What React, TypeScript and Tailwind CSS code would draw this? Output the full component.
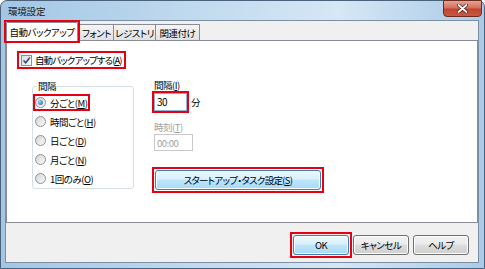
import React from "react";

const font =
  "font-['Meiryo_UI','Noto_Sans_CJK_JP',sans-serif] [font-feature-settings:'palt'] text-[9.5px] leading-[12px] tracking-[-0.5px] text-black whitespace-nowrap";

function Acc({ c }: { c: string }) {
  return (
    <>
      (<span className="underline underline-offset-[1px]">{c}</span>)
    </>
  );
}

function Red({
  children,
  className = "",
  inset = "-inset-[2px]",
}: {
  children: React.ReactNode;
  className?: string;
  inset?: string;
}) {
  return (
    <div className={`relative ${className}`}>
      {children}
      <div
        className={`absolute ${inset} border-2 border-[#e60012] pointer-events-none z-20`}
      />
    </div>
  );
}

function Radio({ checked }: { checked?: boolean }) {
  return (
    <span className="w-[11px] h-[11px] rounded-full border border-[#8e8f8f] bg-[linear-gradient(135deg,#d4d4d4,#fbfbfb)] flex items-center justify-center shrink-0">
      {checked && (
        <span className="w-[5px] h-[5px] rounded-full bg-[radial-gradient(circle_at_35%_35%,#9fd0f5,#1c5aa3)]" />
      )}
    </span>
  );
}

function Btn({
  children,
  def,
  className = "",
}: {
  children: React.ReactNode;
  def?: boolean;
  className?: string;
}) {
  return (
    <div
      className={`h-[20px] rounded-[3px] border flex items-center justify-center shadow-[inset_0_0_0_1px_#fcfcfc] ${
        def
          ? "border-[#3c7fb1] bg-[linear-gradient(#eaf6fd_0%,#d9f0fc_45%,#bee6fd_50%,#a7d9f5_100%)]"
          : "border-[#707070] bg-[linear-gradient(#f2f2f2_0%,#ebebeb_45%,#dddddd_50%,#cfcfcf_100%)]"
      } ${className}`}
    >
      {children}
    </div>
  );
}

export default function App() {
  const items: [string, string][] = [
    ["分ごと", "M"],
    ["時間ごと", "H"],
    ["日ごと", "D"],
    ["月ごと", "N"],
    ["1回のみ", "O"],
  ];
  return (
    <div className={`w-[485px] h-[269px] bg-white ${font}`}>
      <div className="w-[485px] h-[269px] rounded-t-[7px] border border-[#4a627b] bg-[linear-gradient(90deg,#a3c6e5_0%,#c4dcf0_45%,#d6e7f5_70%,#a9cbe8_100%)] flex flex-col">
        {/* title bar */}
        <div className="relative h-[19px] flex items-center pl-[7px] shrink-0">
          <span className="text-[#1a1a1a] tracking-[-0.2px]">環境設定</span>
          <div className="absolute right-[2px] -top-px w-[39px] h-[17px] rounded-b-[4px] border border-[#6b2a22] bg-[linear-gradient(#e5a393_0%,#d6705d_45%,#c2432f_55%,#c75a40_100%)] flex items-center justify-center">
            <svg width="11" height="9" viewBox="0 0 11 9">
              <path
                d="M1.5 1 L9.5 8 M9.5 1 L1.5 8"
                stroke="#3a1a16"
                strokeWidth="3.2"
                strokeLinecap="round"
              />
              <path
                d="M1.5 1 L9.5 8 M9.5 1 L1.5 8"
                stroke="#ffffff"
                strokeWidth="1.8"
                strokeLinecap="round"
              />
            </svg>
          </div>
        </div>

        {/* client */}
        <div className="flex-1 ml-[4px] mr-[5px] mb-[5px] border border-[#7d8fa2] bg-[#f0f0f0] flex flex-col">
          {/* tabs */}
          <div className="h-[19px] flex items-end shrink-0">
            <Red className="z-10 -mb-px" inset="-inset-[2px]">
              <div className="h-[19px] w-[72px] bg-white border border-b-0 border-[#898c95] rounded-t-[2px] flex items-center justify-center">
                自動バックアップ
              </div>
            </Red>
            <div className="h-[16px] w-[35px] ml-[1px] border border-b-0 border-[#898c95] bg-[linear-gradient(#f4f4f4,#e2e2e2)] flex items-center justify-center">
              フォント
            </div>
            <div className="h-[16px] w-[43px] -ml-px border border-b-0 border-[#898c95] bg-[linear-gradient(#f4f4f4,#e2e2e2)] flex items-center justify-center">
              レジストリ
            </div>
            <div className="h-[16px] w-[45px] -ml-px border border-b-0 border-[#898c95] bg-[linear-gradient(#f4f4f4,#e2e2e2)] flex items-center justify-center">
              関連付け
            </div>
          </div>

          {/* panel */}
          <div className="h-[183px] bg-white border border-[#898c95] pl-[14px] pt-[12px] shrink-0">
            <div className="h-[14px] flex items-center">
              <Red className="-ml-[2px]">
                <span className="flex items-center h-[14px] px-[2px]">
                  <span className="w-[11px] h-[11px] border border-[#8e8f8f] bg-[linear-gradient(135deg,#dcdcdc,#fbfbfb)] flex items-center justify-center shrink-0">
                    <svg width="9" height="9" viewBox="0 0 9 9">
                      <path
                        d="M1.5 4.5 L3.7 6.8 L7.8 1.5"
                        stroke="#2a4f7f"
                        strokeWidth="1.6"
                        fill="none"
                      />
                    </svg>
                  </span>
                  <span className="ml-[3px] tracking-[-0.9px]">
                    自動バックアップする<Acc c="A" />
                  </span>
                </span>
              </Red>
            </div>

            <div className="mt-[12px] flex items-start">
              {/* group box */}
              <div className="relative ml-[11px] mt-[7px] w-[102px] h-[103px] border border-[#d5dfe5] rounded-[3px] pt-[6px] pl-[2px]">
                <span className="absolute -top-[7px] left-[4px] px-[1px] bg-white">
                  間隔
                </span>
                {items.map(([t, k], i) => (
                  <div key={t} className="h-[19px] flex items-center">
                    {i === 0 ? (
                      <Red>
                        <span className="flex items-center h-[13px] pr-[1px]">
                          <Radio checked />
                          <span className="ml-[4px]">
                            {t}
                            <Acc c={k} />
                          </span>
                        </span>
                      </Red>
                    ) : (
                      <span className="flex items-center h-[13px]">
                        <Radio />
                        <span className="ml-[4px]">
                          {t}
                          <Acc c={k} />
                        </span>
                      </span>
                    )}
                  </div>
                ))}
              </div>

              {/* right column */}
              <div className="ml-[20px] flex flex-col items-start">
                <div className="h-[12px] flex items-center">
                  間隔<Acc c="I" />
                </div>
                <div className="mt-[2px] flex items-center">
                  <Red>
                    <div className="w-[33px] h-[18px] border border-[#8fb2d6] bg-white flex items-center pl-[2px] text-[10px]">
                      30
                    </div>
                  </Red>
                  <span className="ml-[4px]">分</span>
                </div>
                <div className="mt-[10px] h-[12px] flex items-center text-[#a0a0a0]">
                  時刻<Acc c="T" />
                </div>
                <div className="mt-[1px] w-[39px] h-[17px] border border-[#c9c9c9] bg-white flex items-center pl-[2px] text-[#a0a0a0]">
                  00:00
                </div>
                <Red className="mt-[19px] ml-[1px]" inset="-inset-[3px]">
                  <Btn def className="w-[166px] tracking-[-0.7px]">
                    スタートアップ・タスク設定<Acc c="S" />
                  </Btn>
                </Red>
              </div>
            </div>
          </div>

          {/* bottom buttons */}
          <div className="flex-1 flex justify-end items-start pt-[12px] pr-[9px] gap-[4px]">
            <Red inset="-inset-[3px]">
              <Btn def className="w-[56px]">
                OK
              </Btn>
            </Red>
            <Btn className="w-[56px]">キャンセル</Btn>
            <Btn className="w-[56px]">ヘルプ</Btn>
          </div>
        </div>
      </div>
    </div>
  );
}
